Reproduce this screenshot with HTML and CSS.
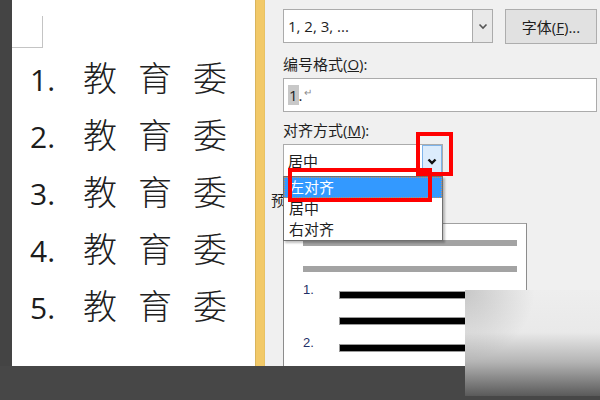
FILE: index.html
```html
<!DOCTYPE html>
<html lang="zh-CN">
<head>
<meta charset="utf-8">
<title>编号格式</title>
<link rel="stylesheet" href="styles.css">
</head>
<body>
<div class="screen">
  <div class="main">
    <div class="gutter"></div>
    <div class="page">
      <div class="corner"></div>
      <ol class="list">
        <li class="row"><span class="num">1.</span><span class="ch">教</span><span class="ch">育</span><span class="ch">委</span></li>
        <li class="row"><span class="num">2.</span><span class="ch">教</span><span class="ch">育</span><span class="ch">委</span></li>
        <li class="row"><span class="num">3.</span><span class="ch">教</span><span class="ch">育</span><span class="ch">委</span></li>
        <li class="row"><span class="num">4.</span><span class="ch">教</span><span class="ch">育</span><span class="ch">委</span></li>
        <li class="row"><span class="num">5.</span><span class="ch">教</span><span class="ch">育</span><span class="ch">委</span></li>
      </ol>
    </div>
    <div class="edge"></div>
    <div class="dialog">
      <div class="cut-label"><span>编号样式(<u>N</u>):</span></div>
      <div class="top-row">
        <div class="combo combo-wide">
          <span class="combo-text">1, 2, 3, ...</span>
          <span class="combo-btn"><svg width="10" height="7" viewBox="0 0 10 7"><path d="M1.5 1.5 L5 5 L8.5 1.5" fill="none" stroke="#555" stroke-width="1.6"/></svg></span>
        </div>
        <div class="btn">字体(<u>F</u>)...</div>
      </div>
      <div class="label label-first">编号格式(<u>O</u>):</div>
      <div class="input"><span class="sel">1</span><span class="dot">.</span><span class="para">↵</span></div>
      <div class="label">对齐方式(<u>M</u>):</div>
      <div class="combo combo-narrow">
        <span class="combo-text">居中</span>
        <span class="combo-btn combo-btn-hot"><svg width="10" height="7" viewBox="0 0 10 7"><path d="M1.5 1.5 L5 5 L8.5 1.5" fill="none" stroke="#111" stroke-width="2.4"/></svg></span>
      </div>
      <div class="preview-label">预览</div>
      <div class="preview">
        <div class="gbar"></div>
        <div class="gbar gbar-second"></div>
        <div class="pitem">
          <span class="pnum">1.</span>
          <div class="pbars"><div class="kbar"></div><div class="kbar"></div></div>
        </div>
        <div class="pitem pitem-second">
          <span class="pnum">2.</span>
          <div class="pbars"><div class="kbar"></div></div>
        </div>
      </div>
      <ul class="dropdown">
        <li class="opt opt-hot">左对齐</li>
        <li class="opt">居中</li>
        <li class="opt">右对齐</li>
      </ul>
    </div>
  </div>
  <div class="taskbar"></div>
  <div class="mark mark-btn"></div>
  <div class="mark mark-item"></div>
  <div class="shade"></div>
</div>
</body>
</html>
```

FILE: styles.css
```css
* { box-sizing: border-box; }
html, body { margin: 0; padding: 0; }
body { width: 600px; height: 400px; overflow: hidden; background: #474747; }

.screen { position: relative; width: 600px; height: 400px; overflow: hidden; }

.main { display: flex; height: 366px; }

.gutter { width: 12px; background: #444444; flex: none; }

.page { width: 243px; flex: none; background: #ffffff; overflow: hidden; }

.corner {
  width: 31px; height: 32px; margin-top: 16px;
  border-right: 1px solid #c4c4c4; border-bottom: 1px solid #c4c4c4;
}

.list { list-style: none; margin: 0; padding: 0 0 0 18px; }
.row { display: flex; align-items: baseline; height: 57px; line-height: 57px; color: #1c1c1c; }
.num { width: 52px; flex: none; font-family: "Open Sans", "Liberation Sans", sans-serif; font-size: 30px; }
.ch {
  width: 55px; flex: none; font-family: "Noto Sans CJK SC", sans-serif;
  font-size: 34px; font-weight: 300; color: #202020; padding-left: 1px;
}

.edge {
  width: 10px; flex: none; background: #f2c968;
  border-left: 1px solid #d9b45c; border-right: 1px solid #e8c264;
}

.dialog {
  position: relative; flex: 1; background: #f0f0f0;
  padding: 0 3px 0 18px; overflow: hidden;
  font-family: "Open Sans", "Noto Sans CJK SC", sans-serif; font-size: 15px; color: #1e1e1e;
}

.cut-label { height: 9px; overflow: hidden; padding-left: 14px; }
.cut-label span { display: block; margin-top: -19px; line-height: 16px; }

.top-row { display: flex; gap: 12px; height: 35px; }

.combo {
  display: flex; align-items: stretch; background: #ffffff;
  border: 1px solid #ababab; height: 34px;
}
.combo-wide { width: 210px; }
.combo-narrow { width: 160px; height: 33px; margin-top: 4px; }
.combo-text { flex: 1; display: flex; align-items: center; padding-left: 4px; }
.combo-btn {
  width: 20px; flex: none; display: flex; align-items: center; justify-content: center;
  background: #e9e9e9; border-left: 1px solid #ababab;
}
.combo-btn-hot { background: #dcecfc; border: 1px solid #7eb4ea; margin: 0 0 -1px 0; }

.btn {
  width: 92px; height: 35px; display: flex; align-items: center; justify-content: center;
  background: #e1e1e1; border: 1px solid #adadad;
}

.label { line-height: 20px; height: 20px; margin-top: 8px; }
.label-first { margin-top: 10px; }

.input {
  height: 34px; margin-top: 4px; width: 314px; background: #ffffff;
  border: 1px solid #ababab; display: flex; align-items: center; padding-left: 4px;
}
.sel { background: #c8c8c8; line-height: 20px; padding: 0 1px; }
.dot { line-height: 20px; }
.para { font-size: 10px; color: #8a8a8a; margin-left: 1px; position: relative; top: -3px; }

.preview-label { line-height: 20px; margin-top: 13px; margin-left: -12px; }

.preview {
  margin-top: 13px; width: 244px; height: 200px; background: #ffffff;
  border: 1px solid #a0a0a0; border-left-color: #8c8c8c; border-right-color: #8c8c8c;
  padding: 16px 0 0 19px;
}
.gbar { width: 214px; height: 6px; background: #a3a3a3; }
.gbar-second { margin-top: 20px; }

.pitem { display: flex; margin-top: 11px; }
.pitem-second { margin-top: 12px; }
.pnum {
  width: 37px; flex: none; font-family: "Liberation Sans", sans-serif; font-size: 13px;
  line-height: 14px; color: #1f2f66;
}
.pbars { padding-top: 9px; display: flex; flex-direction: column; gap: 20px; }
.kbar { width: 177px; height: 6px; background: #000000; box-shadow: 0 0 0 1px #9a9a9a; }

.dropdown {
  position: absolute; left: 18px; top: 176px; width: 160px; margin: 0; padding: 0;
  list-style: none; background: #ffffff; border: 1px solid #707070;
  box-shadow: 2px 2px 2px rgba(0, 0, 0, 0.25);
}
.opt { height: 21px; line-height: 21px; padding-left: 5px; }
.opt-hot { background: #3399ff; color: #ffffff; outline: 1px dotted #c89060; outline-offset: -1px; }

.taskbar { height: 34px; background: #474747; }

.mark { position: absolute; border: 4px solid #ff0000; }
.mark-btn { left: 416px; top: 132px; width: 37px; height: 44px; }
.mark-item { left: 288px; top: 168px; width: 144px; height: 34px; }

.shade {
  position: absolute; left: 465px; top: 290px; width: 135px; height: 106px;
  background:
    radial-gradient(circle at 0 0, rgba(0, 0, 0, 0.16), rgba(0, 0, 0, 0) 70px),
    linear-gradient(to bottom, #eeeeee 0%, #e9e9e9 40%, #b4b4b4 68%, #5a5a5a 100%);
}
```
